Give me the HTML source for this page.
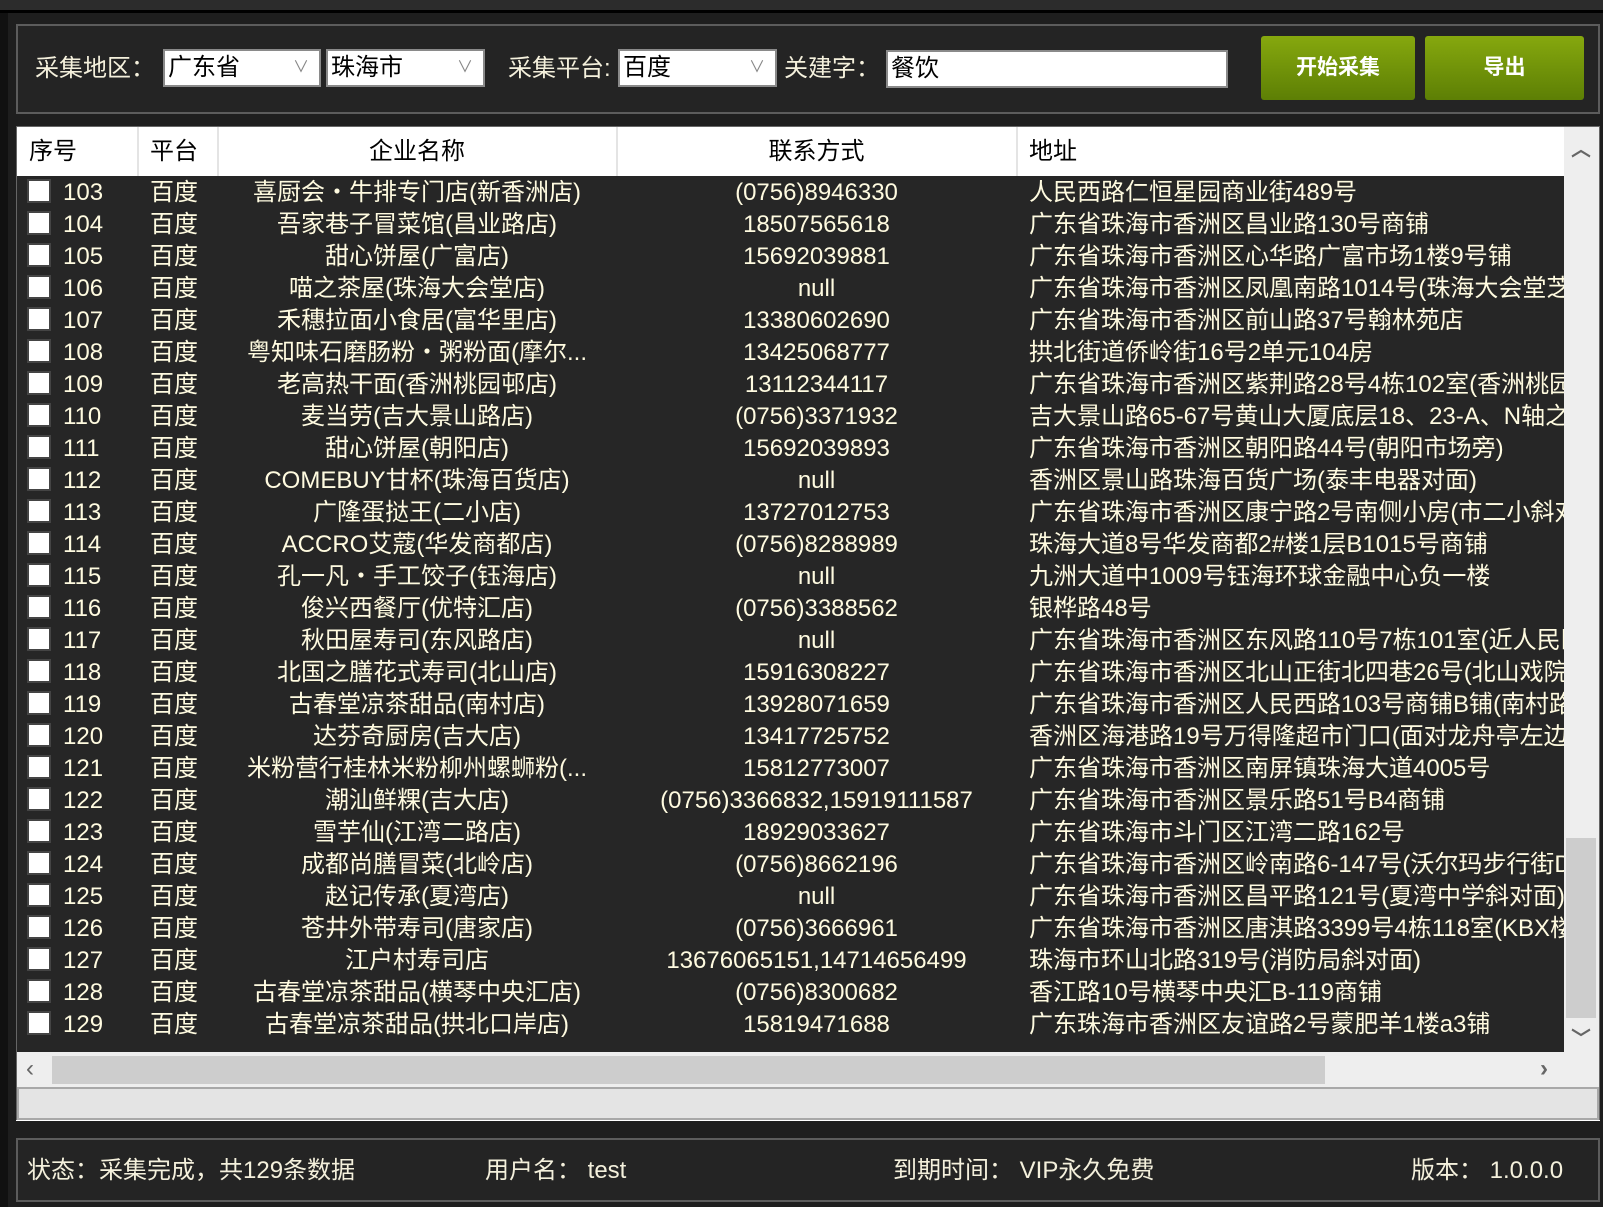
<!DOCTYPE html>
<html><head><meta charset="utf-8"><style>
*{margin:0;padding:0;box-sizing:border-box}
body{width:1603px;height:1207px;background:#1e1e1e;position:relative;overflow:hidden;font-family:"Liberation Sans","Noto Sans CJK SC",sans-serif;color:#fffbe0;font-size:24px}
.a{position:absolute}
.lbl{position:absolute;top:53px;font-size:24px;line-height:32px;color:#f4f0dc}
.sel{position:absolute;top:49px;height:38px;background:#fff;border:2px solid #8a8a8a;color:#000;font-size:24px;line-height:33px;padding-left:3px}
.sel i{position:absolute;right:10px;top:0;font-style:normal;color:#888;font-size:16px}
.btn{position:absolute;top:36px;height:64px;background:linear-gradient(#86a80e,#5d7f05);border-radius:3px;color:#fff;font-weight:bold;font-size:21px;line-height:64px;text-align:center}
.row{position:absolute;left:17px;width:1547px;height:32px;line-height:34px;white-space:nowrap}
.row span{position:absolute;top:0}
.cb{position:absolute;left:10px;top:3px;width:24px;height:24px;background:#fff;border:2px solid #444}
.n{left:46px}.p{left:133px}
.c1{left:200px;width:400px;text-align:center;overflow:hidden}
.c2{left:600px;width:399px;text-align:center}
.c3{left:1012px}
.hd{position:absolute;top:0;line-height:50px;color:#000}
</style></head><body>
<div class="a" style="left:0;top:0;width:1603px;height:10px;background:#2c2c2c"></div>
<div class="a" style="left:0;top:10px;width:1603px;height:3px;background:#000"></div>
<div class="a" style="left:0;top:13px;width:8px;height:1194px;background:#111"></div>
<div class="a" style="left:16px;top:24px;width:1584px;height:90px;border:2px solid #5c5c5c;background:#242424"></div>
<div class="lbl" style="left:35px">采集地区：</div>
<div class="sel" style="left:163px;width:158px">广东省<i>∨</i></div>
<div class="sel" style="left:326px;width:159px">珠海市<i>∨</i></div>
<div class="lbl" style="left:508px">采集平台:</div>
<div class="sel" style="left:618px;width:159px">百度<i>∨</i></div>
<div class="lbl" style="left:784px">关建字：</div>
<div class="sel" style="left:886px;width:342px;top:50px">餐饮</div>
<div class="btn" style="left:1261px;width:154px">开始采集</div>
<div class="btn" style="left:1425px;width:159px">导出</div>

<div class="a" style="left:16px;top:126px;width:1584px;height:995px;border:1px solid #666;background:#eeeeee"></div>
<div class="a" style="left:17px;top:127px;width:1547px;height:49px;background:#fff">
<div class="a" style="left:120px;top:0;width:2px;height:49px;background:#e4e4e4"></div>
<div class="a" style="left:200px;top:0;width:2px;height:49px;background:#e4e4e4"></div>
<div class="a" style="left:599px;top:0;width:2px;height:49px;background:#e4e4e4"></div>
<div class="a" style="left:999px;top:0;width:2px;height:49px;background:#e4e4e4"></div>
<span class="hd" style="left:12px">序号</span><span class="hd" style="left:133px">平台</span>
<span class="hd" style="left:200px;width:400px;text-align:center">企业名称</span>
<span class="hd" style="left:600px;width:399px;text-align:center">联系方式</span>
<span class="hd" style="left:1012px">地址</span>
</div>
<div class="a" style="left:17px;top:176px;width:1547px;height:876px;background:#262626;overflow:hidden"></div>
<div class="a" style="left:1564px;top:127px;width:34px;height:925px;background:#eeeeee"></div>
<div class="a" style="left:1566px;top:838px;width:30px;height:180px;background:#cdcdcd"></div>
<div class="a" style="left:1571px;top:133px;color:#666;font-size:20px;font-weight:bold">︿</div>
<div class="a" style="left:1571px;top:1022px;color:#666;font-size:20px;font-weight:bold">﹀</div>
<div class="a" style="left:52px;top:1056px;width:1273px;height:28px;background:#cdcdcd"></div>
<div class="a" style="left:26px;top:1052px;color:#666;font-size:24px;line-height:34px">‹</div>
<div class="a" style="left:1540px;top:1052px;color:#666;font-size:24px;line-height:34px;font-weight:bold">›</div>
<div class="a" style="left:17px;top:1087px;width:1582px;height:33px;background:#e4e4e4;border:2px solid #a8a8a8"></div>
<div class="a" style="left:16px;top:1120px;width:1584px;height:1px;background:#fff"></div>

<div class="a" style="left:16px;top:1138px;width:1584px;height:64px;border:2px solid #5c5c5c;background:#242424"></div>
<div class="a" style="left:27px;top:1155px;line-height:32px;color:#f4f0dc">状态：采集完成，共129条数据</div>
<div class="a" style="left:485px;top:1155px;line-height:32px;color:#f4f0dc">用户名： test</div>
<div class="a" style="left:893px;top:1155px;line-height:32px;color:#f4f0dc">到期时间： VIP永久免费</div>
<div class="a" style="left:1411px;top:1155px;line-height:32px;color:#f4f0dc">版本： 1.0.0.0</div>

<div class="a" style="left:17px;top:176px;width:1547px;height:876px;overflow:hidden">
<div class="row" style="left:0;top:0"><i class="cb"></i><span class="n">103</span><span class="p">百度</span><span class="c1">喜厨会・牛排专门店(新香洲店)</span><span class="c2">(0756)8946330</span><span class="c3">人民西路仁恒星园商业街489号</span></div>
<div class="row" style="left:0;top:32px"><i class="cb"></i><span class="n">104</span><span class="p">百度</span><span class="c1">吾家巷子冒菜馆(昌业路店)</span><span class="c2">18507565618</span><span class="c3">广东省珠海市香洲区昌业路130号商铺</span></div>
<div class="row" style="left:0;top:64px"><i class="cb"></i><span class="n">105</span><span class="p">百度</span><span class="c1">甜心饼屋(广富店)</span><span class="c2">15692039881</span><span class="c3">广东省珠海市香洲区心华路广富市场1楼9号铺</span></div>
<div class="row" style="left:0;top:96px"><i class="cb"></i><span class="n">106</span><span class="p">百度</span><span class="c1">喵之茶屋(珠海大会堂店)</span><span class="c2">null</span><span class="c3">广东省珠海市香洲区凤凰南路1014号(珠海大会堂芝</span></div>
<div class="row" style="left:0;top:128px"><i class="cb"></i><span class="n">107</span><span class="p">百度</span><span class="c1">禾穗拉面小食居(富华里店)</span><span class="c2">13380602690</span><span class="c3">广东省珠海市香洲区前山路37号翰林苑店</span></div>
<div class="row" style="left:0;top:160px"><i class="cb"></i><span class="n">108</span><span class="p">百度</span><span class="c1">粤知味石磨肠粉・粥粉面(摩尔...</span><span class="c2">13425068777</span><span class="c3">拱北街道侨岭街16号2单元104房</span></div>
<div class="row" style="left:0;top:192px"><i class="cb"></i><span class="n">109</span><span class="p">百度</span><span class="c1">老高热干面(香洲桃园邨店)</span><span class="c2">13112344117</span><span class="c3">广东省珠海市香洲区紫荆路28号4栋102室(香洲桃园</span></div>
<div class="row" style="left:0;top:224px"><i class="cb"></i><span class="n">110</span><span class="p">百度</span><span class="c1">麦当劳(吉大景山路店)</span><span class="c2">(0756)3371932</span><span class="c3">吉大景山路65-67号黄山大厦底层18、23-A、N轴之三</span></div>
<div class="row" style="left:0;top:256px"><i class="cb"></i><span class="n">111</span><span class="p">百度</span><span class="c1">甜心饼屋(朝阳店)</span><span class="c2">15692039893</span><span class="c3">广东省珠海市香洲区朝阳路44号(朝阳市场旁)</span></div>
<div class="row" style="left:0;top:288px"><i class="cb"></i><span class="n">112</span><span class="p">百度</span><span class="c1">COMEBUY甘杯(珠海百货店)</span><span class="c2">null</span><span class="c3">香洲区景山路珠海百货广场(泰丰电器对面)</span></div>
<div class="row" style="left:0;top:320px"><i class="cb"></i><span class="n">113</span><span class="p">百度</span><span class="c1">广隆蛋挞王(二小店)</span><span class="c2">13727012753</span><span class="c3">广东省珠海市香洲区康宁路2号南侧小房(市二小斜对</span></div>
<div class="row" style="left:0;top:352px"><i class="cb"></i><span class="n">114</span><span class="p">百度</span><span class="c1">ACCRO艾蔻(华发商都店)</span><span class="c2">(0756)8288989</span><span class="c3">珠海大道8号华发商都2#楼1层B1015号商铺</span></div>
<div class="row" style="left:0;top:384px"><i class="cb"></i><span class="n">115</span><span class="p">百度</span><span class="c1">孔一凡・手工饺子(钰海店)</span><span class="c2">null</span><span class="c3">九洲大道中1009号钰海环球金融中心负一楼</span></div>
<div class="row" style="left:0;top:416px"><i class="cb"></i><span class="n">116</span><span class="p">百度</span><span class="c1">俊兴西餐厅(优特汇店)</span><span class="c2">(0756)3388562</span><span class="c3">银桦路48号</span></div>
<div class="row" style="left:0;top:448px"><i class="cb"></i><span class="n">117</span><span class="p">百度</span><span class="c1">秋田屋寿司(东风路店)</span><span class="c2">null</span><span class="c3">广东省珠海市香洲区东风路110号7栋101室(近人民医</span></div>
<div class="row" style="left:0;top:480px"><i class="cb"></i><span class="n">118</span><span class="p">百度</span><span class="c1">北国之膳花式寿司(北山店)</span><span class="c2">15916308227</span><span class="c3">广东省珠海市香洲区北山正街北四巷26号(北山戏院</span></div>
<div class="row" style="left:0;top:512px"><i class="cb"></i><span class="n">119</span><span class="p">百度</span><span class="c1">古春堂凉茶甜品(南村店)</span><span class="c2">13928071659</span><span class="c3">广东省珠海市香洲区人民西路103号商铺B铺(南村路</span></div>
<div class="row" style="left:0;top:544px"><i class="cb"></i><span class="n">120</span><span class="p">百度</span><span class="c1">达芬奇厨房(吉大店)</span><span class="c2">13417725752</span><span class="c3">香洲区海港路19号万得隆超市门口(面对龙舟亭左边</span></div>
<div class="row" style="left:0;top:576px"><i class="cb"></i><span class="n">121</span><span class="p">百度</span><span class="c1">米粉营行桂林米粉柳州螺蛳粉(...</span><span class="c2">15812773007</span><span class="c3">广东省珠海市香洲区南屏镇珠海大道4005号</span></div>
<div class="row" style="left:0;top:608px"><i class="cb"></i><span class="n">122</span><span class="p">百度</span><span class="c1">潮汕鲜粿(吉大店)</span><span class="c2">(0756)3366832,15919111587</span><span class="c3">广东省珠海市香洲区景乐路51号B4商铺</span></div>
<div class="row" style="left:0;top:640px"><i class="cb"></i><span class="n">123</span><span class="p">百度</span><span class="c1">雪芋仙(江湾二路店)</span><span class="c2">18929033627</span><span class="c3">广东省珠海市斗门区江湾二路162号</span></div>
<div class="row" style="left:0;top:672px"><i class="cb"></i><span class="n">124</span><span class="p">百度</span><span class="c1">成都尚膳冒菜(北岭店)</span><span class="c2">(0756)8662196</span><span class="c3">广东省珠海市香洲区岭南路6-147号(沃尔玛步行街D</span></div>
<div class="row" style="left:0;top:704px"><i class="cb"></i><span class="n">125</span><span class="p">百度</span><span class="c1">赵记传承(夏湾店)</span><span class="c2">null</span><span class="c3">广东省珠海市香洲区昌平路121号(夏湾中学斜对面)</span></div>
<div class="row" style="left:0;top:736px"><i class="cb"></i><span class="n">126</span><span class="p">百度</span><span class="c1">苍井外带寿司(唐家店)</span><span class="c2">(0756)3666961</span><span class="c3">广东省珠海市香洲区唐淇路3399号4栋118室(KBX楼下</span></div>
<div class="row" style="left:0;top:768px"><i class="cb"></i><span class="n">127</span><span class="p">百度</span><span class="c1">江户村寿司店</span><span class="c2">13676065151,14714656499</span><span class="c3">珠海市环山北路319号(消防局斜对面)</span></div>
<div class="row" style="left:0;top:800px"><i class="cb"></i><span class="n">128</span><span class="p">百度</span><span class="c1">古春堂凉茶甜品(横琴中央汇店)</span><span class="c2">(0756)8300682</span><span class="c3">香江路10号横琴中央汇B-119商铺</span></div>
<div class="row" style="left:0;top:832px"><i class="cb"></i><span class="n">129</span><span class="p">百度</span><span class="c1">古春堂凉茶甜品(拱北口岸店)</span><span class="c2">15819471688</span><span class="c3">广东珠海市香洲区友谊路2号蒙肥羊1楼a3铺</span></div>
</div>
</body></html>
